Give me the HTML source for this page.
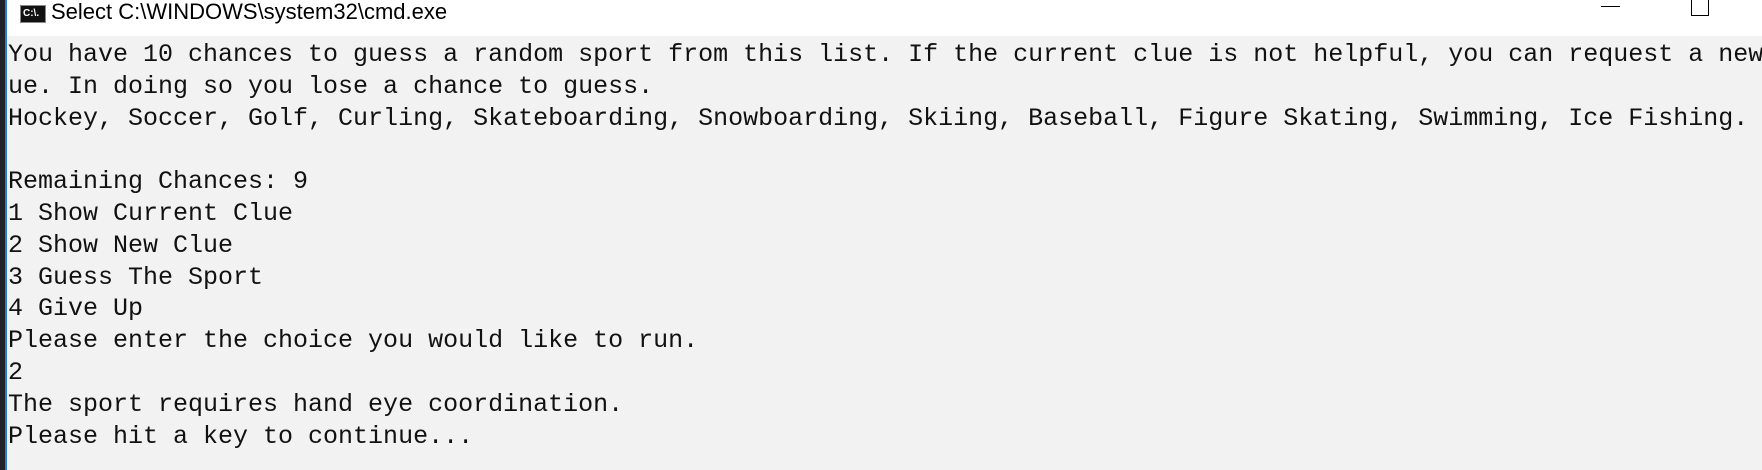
<!DOCTYPE html>
<html><head><meta charset="utf-8"><style>
html,body{margin:0;padding:0;width:1762px;height:470px;overflow:hidden;background:#f2f2f2;}
#title{position:absolute;left:0;top:0;width:1762px;height:36px;background:#fff;}
#strip{position:absolute;left:0;top:0;width:5px;height:470px;background:#1f2228;}
#blue{position:absolute;left:5px;top:0;width:2px;height:470px;background:#2b7cd3;}
#icon{position:absolute;left:20px;top:5px;width:24px;height:16px;background:#111;border:1px solid #888;color:#fff;font:bold 10px "Liberation Sans",sans-serif;line-height:16px;text-indent:2px;}
#tt{position:absolute;left:51px;top:-1px;font:22px "Liberation Sans",sans-serif;color:#000;white-space:nowrap;}
#min{position:absolute;left:1601px;top:6px;width:19px;height:1px;background:#000;}
#max{position:absolute;left:1691px;top:-2px;width:16px;height:16px;border:1px solid #000;}
pre{position:absolute;left:8px;top:39px;margin:0;font:25px/31.8px "Liberation Mono",monospace;color:#111;white-space:pre;}
</style></head><body>
<div id="title"><div id="icon">C:\.</div><div id="tt">Select C:\WINDOWS\system32\cmd.exe</div><div id="min"></div><div id="max"></div></div>
<div id="strip"></div><div id="blue"></div>
<pre>You have 10 chances to guess a random sport from this list. If the current clue is not helpful, you can request a new
ue. In doing so you lose a chance to guess.
Hockey, Soccer, Golf, Curling, Skateboarding, Snowboarding, Skiing, Baseball, Figure Skating, Swimming, Ice Fishing.

Remaining Chances: 9
1 Show Current Clue
2 Show New Clue
3 Guess The Sport
4 Give Up
Please enter the choice you would like to run.
2
The sport requires hand eye coordination.
Please hit a key to continue...</pre>
</body></html>
